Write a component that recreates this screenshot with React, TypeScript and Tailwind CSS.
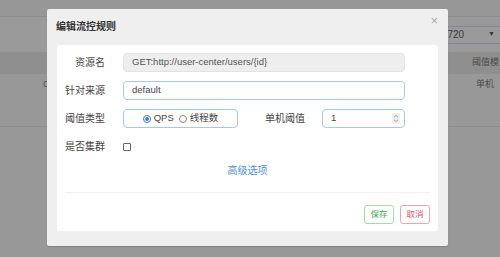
import React from "react";

const F = { fontFamily: '"Liberation Sans", "Noto Sans CJK SC", sans-serif' };

export default function App() {
  return (
    <div className="relative w-[500px] h-[257px] overflow-hidden bg-[#989898]" style={F}>
      {/* background page under overlay */}
      <div className="flex flex-col">
        <div className="h-[17px] bg-[#979797] border-b border-[#8c8c8c]" />
        <div className="h-[35px] bg-[#9a9a9a] flex items-center justify-end">
          <div className="w-[125px] h-[18px] border border-[#7d8796] border-r-0 rounded-l-[3px] flex items-center justify-between pl-[27px] pr-[5px] text-[10px] text-[#3a3a3a]">
            <span className="whitespace-nowrap">10.0.0.1:8720</span>
            <span className="text-[7px]">▼</span>
          </div>
        </div>
        <div className="h-[22px] bg-[#8f8f8f] flex items-center justify-end text-[9px] text-[#4a4a4a] overflow-hidden">
          <span className="mr-[-8px] whitespace-nowrap">阈值模式</span>
        </div>
        <div className="h-[53px] border-b border-[#8e8e8e] flex items-start justify-between pt-[4px] text-[9px] text-[#4a4a4a]">
          <span className="ml-[43px] text-[#555]">C</span>
          <span className="mr-[6px]">单机</span>
        </div>
      </div>

      {/* modal */}
      <div className="absolute left-[47px] top-[9px] w-[401px] h-[237px] bg-[#efefef] rounded-[2px] shadow-[0_1px_1px_rgba(0,0,0,0.15)] flex flex-col">
        <div className="h-[36px] flex items-center justify-between pl-[9px] pr-[10px]">
          <span className="text-[10px] font-bold text-[#333] mt-[-2px]">编辑流控规则</span>
          <span className="text-[13px] text-[#aaa] leading-none mt-[-13px]">×</span>
        </div>
        <div className="mx-[10px] h-[186px] bg-white rounded-[3px] flex flex-col px-[8px]">
          <div className="flex flex-col gap-[9px] pt-[8px] text-[10px] text-[#444]">
            <div className="flex items-center h-[19px]">
              <span className="w-[40px] text-right">资源名</span>
              <div className="ml-[18px] w-[282px] h-[19px] bg-[#eeeeee] border border-[#e2e2e2] rounded-[4px] flex items-center px-[8px] text-[9.5px] text-[#555]">
                GET:http://user-center/users/{"{id}"}
              </div>
            </div>
            <div className="flex items-center h-[19px]">
              <span className="w-[40px] text-right">针对来源</span>
              <div className="ml-[18px] w-[282px] h-[19px] bg-white border border-[#a9c7e8] rounded-[4px] flex items-center px-[8px] text-[9.5px] text-[#444]">
                default
              </div>
            </div>
            <div className="flex items-center h-[19px]">
              <span className="w-[40px] text-right">阈值类型</span>
              <div className="ml-[18px] w-[115px] h-[19px] bg-white border border-[#a9c7e8] rounded-[4px] flex items-center justify-center gap-[5px] text-[9.5px] text-[#444]">
                <span className="flex items-center gap-[3px]">
                  <span className="w-[8px] h-[8px] rounded-full border border-[#3b82d6] flex items-center justify-center">
                    <span className="w-[4px] h-[4px] rounded-full bg-[#3b82d6]" />
                  </span>
                  QPS
                </span>
                <span className="flex items-center gap-[3px]">
                  <span className="w-[8px] h-[8px] rounded-full border border-[#888]" />
                  线程数
                </span>
              </div>
              <span className="ml-[26px] w-[41px] text-right">单机阈值</span>
              <div className="ml-[17px] w-[83px] h-[19px] bg-white border border-[#a9c7e8] rounded-[4px] flex items-center justify-between pl-[8px] pr-[4px] text-[9.5px] text-[#444]">
                <span>1</span>
                <span className="w-[8px] h-[11px] bg-[#efefef] rounded-[1px] flex flex-col items-center justify-center">
                  <svg width="6" height="9" viewBox="0 0 6 9" fill="none" stroke="#888" strokeWidth="0.8">
                    <path d="M1 3.2 L3 1.5 L5 3.2" />
                    <path d="M1 5.8 L3 7.5 L5 5.8" />
                  </svg>
                </span>
              </div>
            </div>
            <div className="flex items-center h-[19px]">
              <span className="w-[40px] text-right">是否集群</span>
              <span className="ml-[18px] w-[8px] h-[8px] border border-[#666] rounded-[1px]" />
            </div>
          </div>
          <div className="h-[23px] flex items-center justify-center text-[10px] text-[#4a90d9] mt-[3px]">高级选项</div>
          <div className="mt-[10px] h-px bg-[#efefef]" />
          <div className="flex justify-end gap-[6px] pt-[12px]">
            <span className="w-[30px] h-[19px] border border-[#a3dba9] rounded-[3px] text-[8.5px] text-[#3daa4f] flex items-center justify-center">保存</span>
            <span className="w-[30px] h-[19px] border border-[#f0a3ab] rounded-[3px] text-[8.5px] text-[#e0545f] flex items-center justify-center">取消</span>
          </div>
        </div>
      </div>
    </div>
  );
}
